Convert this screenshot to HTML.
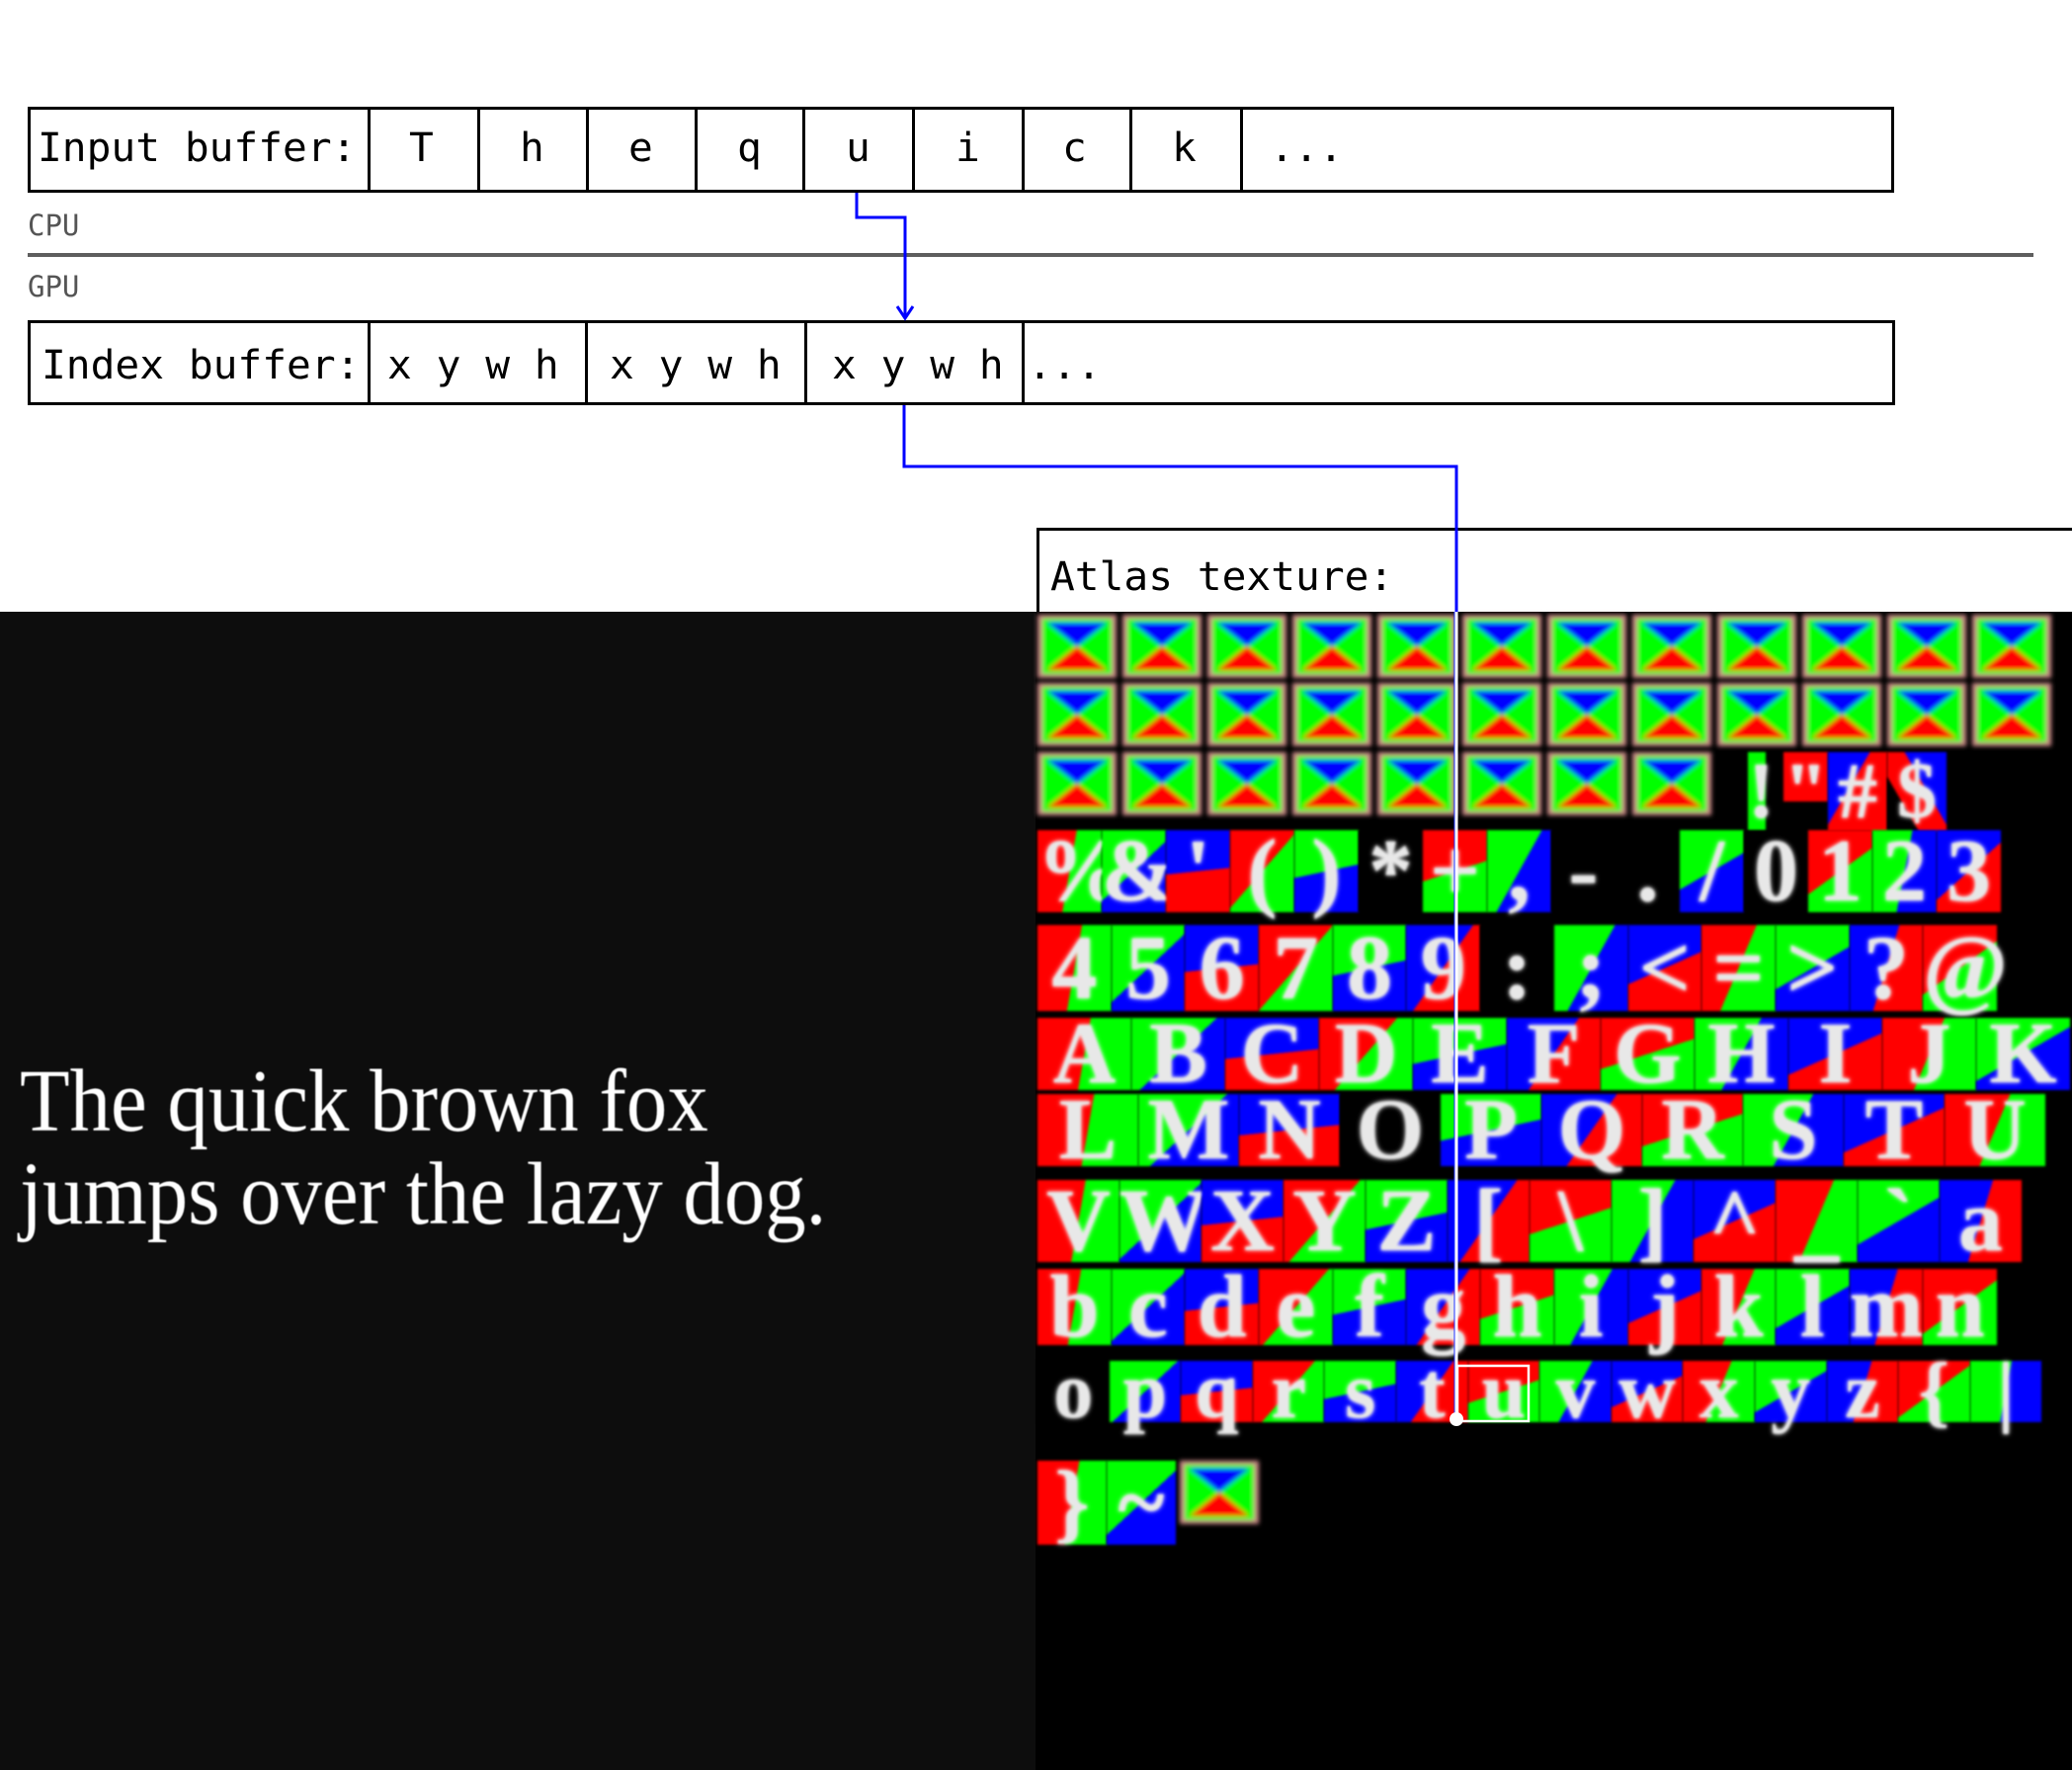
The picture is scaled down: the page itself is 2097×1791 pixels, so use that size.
<!DOCTYPE html>
<html><head><meta charset="utf-8"><style>
*{margin:0;padding:0;box-sizing:border-box}
body{width:2097px;height:1791px;position:relative;background:#fff;overflow:hidden;font-family:"DejaVu Sans Mono","Liberation Mono",monospace}
.a{position:absolute}
.box{position:absolute;border:3px solid #000;background:#fff}
.v{position:absolute;top:0;bottom:0;width:3px;background:#000}
.t{position:absolute;font-size:40px;color:#000;line-height:1;white-space:pre;transform-origin:0 0;transform:scaleX(1.03)}
.lab{position:absolute;font-size:29px;color:#555;font-family:"DejaVu Sans Mono",monospace}
.row{position:absolute;display:flex;left:1050px}
.row span{display:block;text-align:center;color:#e8e8e8;font-family:"Liberation Serif",serif;font-weight:bold;filter:blur(1.2px);text-shadow:0 0 4px #fff}
</style></head><body>
<div class="box" style="left:28px;top:108px;width:1889px;height:87px">
<div class="v" style="left:341px"></div><div class="v" style="left:452px"></div><div class="v" style="left:562px"></div><div class="v" style="left:672px"></div><div class="v" style="left:781px"></div><div class="v" style="left:892px"></div><div class="v" style="left:1003px"></div><div class="v" style="left:1112px"></div><div class="v" style="left:1224px"></div>
</div>
<div class="t" style="left:38px;top:130px">Input buffer:</div>
<div class="t" style="left:414px;top:130px">T</div>
<div class="t" style="left:526px;top:130px">h</div>
<div class="t" style="left:636px;top:130px">e</div>
<div class="t" style="left:746px;top:130px">q</div>
<div class="t" style="left:856px;top:130px">u</div>
<div class="t" style="left:967px;top:130px">i</div>
<div class="t" style="left:1075px;top:130px">c</div>
<div class="t" style="left:1186px;top:130px">k</div>
<div class="t" style="left:1285px;top:130px">...</div>
<div class="lab" style="left:28px;top:211px">CPU</div>
<div class="a" style="left:28px;top:256px;width:2030px;height:4px;background:#5e5e5e"></div>
<div class="lab" style="left:28px;top:273px">GPU</div>
<div class="box" style="left:28px;top:324px;width:1890px;height:86px">
<div class="v" style="left:341px"></div><div class="v" style="left:561px"></div><div class="v" style="left:783px"></div><div class="v" style="left:1003px"></div>
</div>
<div class="t" style="left:42px;top:350px">Index buffer:</div>
<div class="t" style="left:392px;top:350px">x y w h</div>
<div class="t" style="left:617px;top:350px">x y w h</div>
<div class="t" style="left:842px;top:350px">x y w h</div>
<div class="t" style="left:1040px;top:350px">...</div>
<div class="box" style="left:1049px;top:534px;width:1060px;height:90px;border-right:none"></div>
<div class="t" style="left:1063px;top:564px">Atlas texture:</div>
<div class="a" style="left:0;top:619px;width:1048px;height:1172px;background:#0d0d0d"></div>
<div class="a" style="left:1048px;top:619px;width:1049px;height:1172px;background:#000"></div>
<div class="a" style="left:20px;top:1068px;color:#fff;font-family:'Liberation Serif',serif;font-size:90px;line-height:94px;white-space:pre;filter:blur(0.6px);transform-origin:0 0;transform:scaleX(0.92)">The quick brown fox
jumps over the lazy dog.</div>
<svg class="a" style="left:0;top:0" width="2097" height="1791">
<defs>
<filter id="b"><feGaussianBlur stdDeviation="2.5"/></filter>
<g id="tl">
<rect x="0" y="0" width="80" height="64" fill="#c88"/>
<rect x="5" y="4" width="70" height="56" fill="#00ff00"/>
<polygon points="10,8 70,8 40,32" fill="#0000ff"/>
<polygon points="10,56 70,56 40,32" fill="#ff0000"/>
</g>
</defs>
<g filter="url(#b)">
<use href="#tl" x="1050" y="622"/><use href="#tl" x="1136" y="622"/><use href="#tl" x="1222" y="622"/><use href="#tl" x="1308" y="622"/><use href="#tl" x="1394" y="622"/><use href="#tl" x="1480" y="622"/><use href="#tl" x="1566" y="622"/><use href="#tl" x="1652" y="622"/><use href="#tl" x="1738" y="622"/><use href="#tl" x="1824" y="622"/><use href="#tl" x="1910" y="622"/><use href="#tl" x="1996" y="622"/>
<use href="#tl" x="1050" y="691"/><use href="#tl" x="1136" y="691"/><use href="#tl" x="1222" y="691"/><use href="#tl" x="1308" y="691"/><use href="#tl" x="1394" y="691"/><use href="#tl" x="1480" y="691"/><use href="#tl" x="1566" y="691"/><use href="#tl" x="1652" y="691"/><use href="#tl" x="1738" y="691"/><use href="#tl" x="1824" y="691"/><use href="#tl" x="1910" y="691"/><use href="#tl" x="1996" y="691"/>
<use href="#tl" x="1050" y="761"/><use href="#tl" x="1136" y="761"/><use href="#tl" x="1222" y="761"/><use href="#tl" x="1308" y="761"/><use href="#tl" x="1394" y="761"/><use href="#tl" x="1480" y="761"/><use href="#tl" x="1566" y="761"/><use href="#tl" x="1652" y="761"/>
<use href="#tl" x="1194" y="1478"/>
</g>
</svg>
<div class="row" style="top:761px;left:1760px"><span style="width:45px;height:80px;font-size:80px;line-height:80px;background:linear-gradient(90deg,#000 20%,#0f0 20%,#0f0 60%,#000 60%)">!</span><span style="width:45px;height:50px;font-size:80px;line-height:80px;background:#f00">"</span><span style="width:60px;height:80px;font-size:80px;line-height:80px;background:linear-gradient(120deg,#00f 40%,#f00 40%)">#</span><span style="width:60px;height:80px;font-size:80px;line-height:80px;background:linear-gradient(60deg,#000 30%,#f00 30%,#f00 60%,#00f 60%)">$</span></div>
<div class="row" style="top:840px" id="r4"></div>
<div class="row" style="top:936px" id="r5"></div>
<div class="row" style="top:1030px" id="r6"></div>
<div class="row" style="top:1107px" id="r7"></div>
<div class="row" style="top:1194px" id="r8"></div>
<div class="row" style="top:1284px" id="r9"></div>
<div class="row" style="top:1377px" id="r10"></div>
<div class="row" style="top:1478px" id="r11"></div>
<svg class="a" style="left:0;top:0" width="2097" height="1791">
<polyline points="867,195 867,220 916,220 916,321" fill="none" stroke="#0000ff" stroke-width="3"/>
<polyline points="908,310 916,322 924,310" fill="none" stroke="#0000ff" stroke-width="3"/>
<polyline points="915,410 915,472 1474,472 1474,619" fill="none" stroke="#0000ff" stroke-width="3"/>
<line x1="1474" y1="619" x2="1474" y2="1436" stroke="#fff" stroke-width="3"/>
<line x1="1472" y1="619" x2="1472" y2="1436" stroke="#2233ff" stroke-width="1"/>
<rect x="1475" y="1382" width="72" height="56" fill="none" stroke="#fff" stroke-width="2.5"/>
<circle cx="1474" cy="1436" r="7" fill="#fff"/>
</svg>
<script>
var C=['#f00','#0f0','#00f'];
function mk(id,str,w,h,fs){var r=document.getElementById(id),k=0;for(var ch of str){var s=document.createElement('span');var c1=C[k%3],c2=C[(k+1)%3];var bg=(ch=='0'||ch=='O'||ch=='o'||ch=='*'||ch==':'||ch=='-'||ch=='.')?'#000':'linear-gradient('+(100+k*37%80)+'deg,'+c1+' 50%,'+c2+' 50%)';s.style.cssText='width:'+w+'px;height:'+h+'px;font-size:'+fs+'px;line-height:'+h+'px;background:'+bg;s.textContent=ch;r.appendChild(s);k++;}}
mk('r4',"%&'()*+,-./0123",65,83,90);
mk('r5',"456789:;<=>?@",74.7,87,92);
mk('r6',"ABCDEFGHIJK",95,73,88);
mk('r7',"LMNOPQRSTU",102,73,88);
mk('r8',"VWXYZ[\\]^_`a",83,83,90);
mk('r9',"bcdefghijklmn",74.7,77,90);
mk('r10',"opqrstuvwxyz{|",72.6,62,80);
mk('r11',"}~",70,85,90);
</script>
</body></html>
